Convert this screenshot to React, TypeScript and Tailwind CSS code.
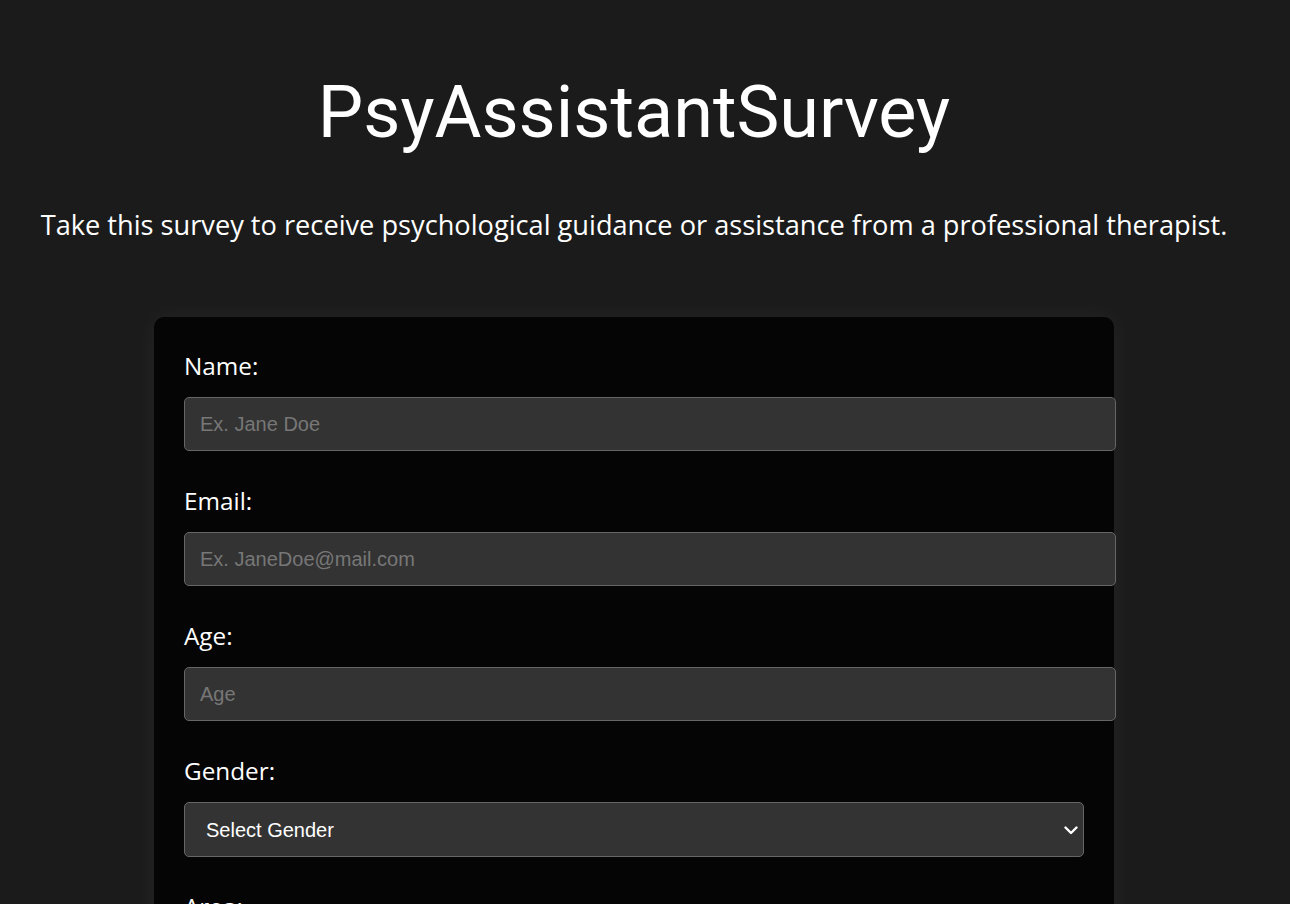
import React from "react";

const labelClass =
  "block text-[24.3px] leading-[36px] text-white mb-[13px] [font-family:'Open_Sans',sans-serif]";
const inputClass =
  "block box-border w-[932px] h-[54px] px-[15px] rounded-[5px] border border-[#666] bg-[#333] text-[20px] text-white placeholder:text-[#777] outline-none [font-family:'Liberation_Sans',Arial,sans-serif]";

const Field = ({ label, placeholder, type = "text" }: { label: string; placeholder: string; type?: string }) => (
  <div className="mb-[32px]">
    <label className={labelClass}>{label}</label>
    <input type={type} placeholder={placeholder} className={inputClass} />
  </div>
);

const SelectField = ({ label, options }: { label: string; options: string[] }) => (
  <div className="mb-[32px]">
    <label className={labelClass}>{label}</label>
    <div className="relative w-[900px]">
      <select className="block box-border w-[900px] h-[55px] pl-[21px] pr-[40px] rounded-[5px] border border-[#666] bg-[#333] text-[20px] text-white appearance-none outline-none [font-family:'Liberation_Sans',Arial,sans-serif]">
        {options.map((o) => (
          <option key={o}>{o}</option>
        ))}
      </select>
      <svg
        className="absolute right-[6px] top-[24px] pointer-events-none"
        width="14"
        height="9"
        viewBox="0 0 14 9"
        fill="none"
      >
        <path d="M1.5 1.5 L7 7 L12.5 1.5" stroke="white" strokeWidth="2.4" strokeLinecap="round" strokeLinejoin="round" />
      </svg>
    </div>
  </div>
);

export default function App() {
  return (
    <div className="min-h-screen bg-[#1b1b1b] pr-[22px] overflow-hidden">
      <h1 className="pt-[77px] text-center text-[72px] leading-none text-white [font-family:Roboto,sans-serif]">
        PsyAssistantSurvey
      </h1>
      <p className="mt-[58px] text-center text-[27.2px] leading-[36px] text-white [font-family:'Open_Sans',sans-serif]">
        Take this survey to receive psychological guidance or assistance from a professional therapist.
      </p>
      <form className="mx-auto mt-[74px] w-[960px] box-border rounded-[10px] bg-[#050505] px-[30px] pt-[31px] pb-[30px] shadow-[0_0_24px_rgba(255,255,255,0.05)]">
        <Field label="Name:" placeholder="Ex. Jane Doe" />
        <Field label="Email:" placeholder="Ex. JaneDoe@mail.com" type="email" />
        <Field label="Age:" placeholder="Age" />
        <SelectField label="Gender:" options={["Select Gender", "Female", "Male", "Other"]} />
        <SelectField label="Area:" options={["Select Area", "Anxiety", "Depression", "Relationships"]} />
      </form>
    </div>
  );
}
